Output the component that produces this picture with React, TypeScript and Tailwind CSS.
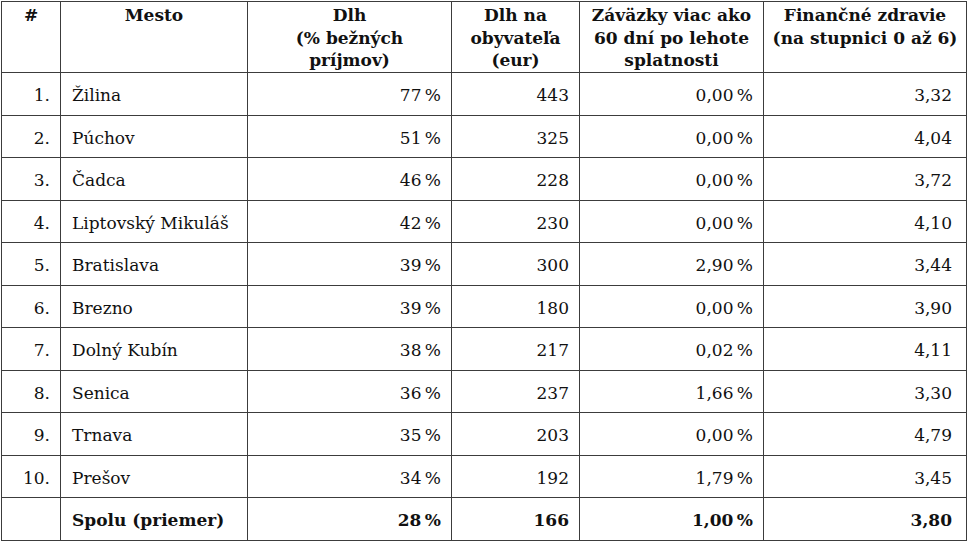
const rows = [
  ["1.", "Žilina", "77\u2009%", "443", "0,00\u2009%", "3,32"],
  ["2.", "Púchov", "51\u2009%", "325", "0,00\u2009%", "4,04"],
  ["3.", "Čadca", "46\u2009%", "228", "0,00\u2009%", "3,72"],
  ["4.", "Liptovský Mikuláš", "42\u2009%", "230", "0,00\u2009%", "4,10"],
  ["5.", "Bratislava", "39\u2009%", "300", "2,90\u2009%", "3,44"],
  ["6.", "Brezno", "39\u2009%", "180", "0,00\u2009%", "3,90"],
  ["7.", "Dolný Kubín", "38\u2009%", "217", "0,02\u2009%", "4,11"],
  ["8.", "Senica", "36\u2009%", "237", "1,66\u2009%", "3,30"],
  ["9.", "Trnava", "35\u2009%", "203", "0,00\u2009%", "4,79"],
  ["10.", "Prešov", "34\u2009%", "192", "1,79\u2009%", "3,45"],
];

const cell = "border border-[#3c3c3c] px-[10px] pt-[4px] align-middle";
const head = "border border-[#3c3c3c] px-[4px] pt-[2px] align-top text-center font-bold";

export default function App() {
  return (
    <div className="bg-white w-[969px] h-[546px] pl-px pt-px font-['DejaVu_Serif',serif] text-[17px] text-[#111]">
      <table className="table-fixed border-collapse w-[965px]">
        <colgroup>
          <col className="w-[59px]" />
          <col className="w-[187px]" />
          <col className="w-[204px]" />
          <col className="w-[128px]" />
          <col className="w-[184px]" />
          <col className="w-[203px]" />
        </colgroup>
        <thead>
          <tr className="h-[71px] font-bold leading-[22.5px]">
            <th className={head}>#</th>
            <th className={head}>Mesto</th>
            <th className={head}>
              Dlh
              <br />
              (% bežných
              <br />
              príjmov)
            </th>
            <th className={head}>
              Dlh na
              <br />
              obyvateľa
              <br />
              (eur)
            </th>
            <th className={head}>
              Záväzky viac ako
              <br />
              60 dní po lehote
              <br />
              splatnosti
            </th>
            <th className={head}>
              Finančné zdravie
              <br />
              (na stupnici 0 až 6)
            </th>
          </tr>
        </thead>
        <tbody>
          {rows.map((r) => (
            <tr key={r[0]} className="h-[42.5px]">
              <td className={`${cell} text-right`}>{r[0]}</td>
              <td className={`${cell} text-left pl-[11px]`}>{r[1]}</td>
              <td className={`${cell} text-right`}>{r[2]}</td>
              <td className={`${cell} text-right`}>{r[3]}</td>
              <td className={`${cell} text-right`}>{r[4]}</td>
              <td className={`${cell} text-right pr-[14px]`}>{r[5]}</td>
            </tr>
          ))}
          <tr className="h-[42.5px] font-bold">
            <td className={cell}></td>
            <td className={`${cell} text-left pl-[11px]`}>Spolu (priemer)</td>
            <td className={`${cell} text-right`}>28{"\u2009"}%</td>
            <td className={`${cell} text-right`}>166</td>
            <td className={`${cell} text-right`}>1,00{"\u2009"}%</td>
            <td className={`${cell} text-right pr-[14px]`}>3,80</td>
          </tr>
        </tbody>
      </table>
    </div>
  );
}
